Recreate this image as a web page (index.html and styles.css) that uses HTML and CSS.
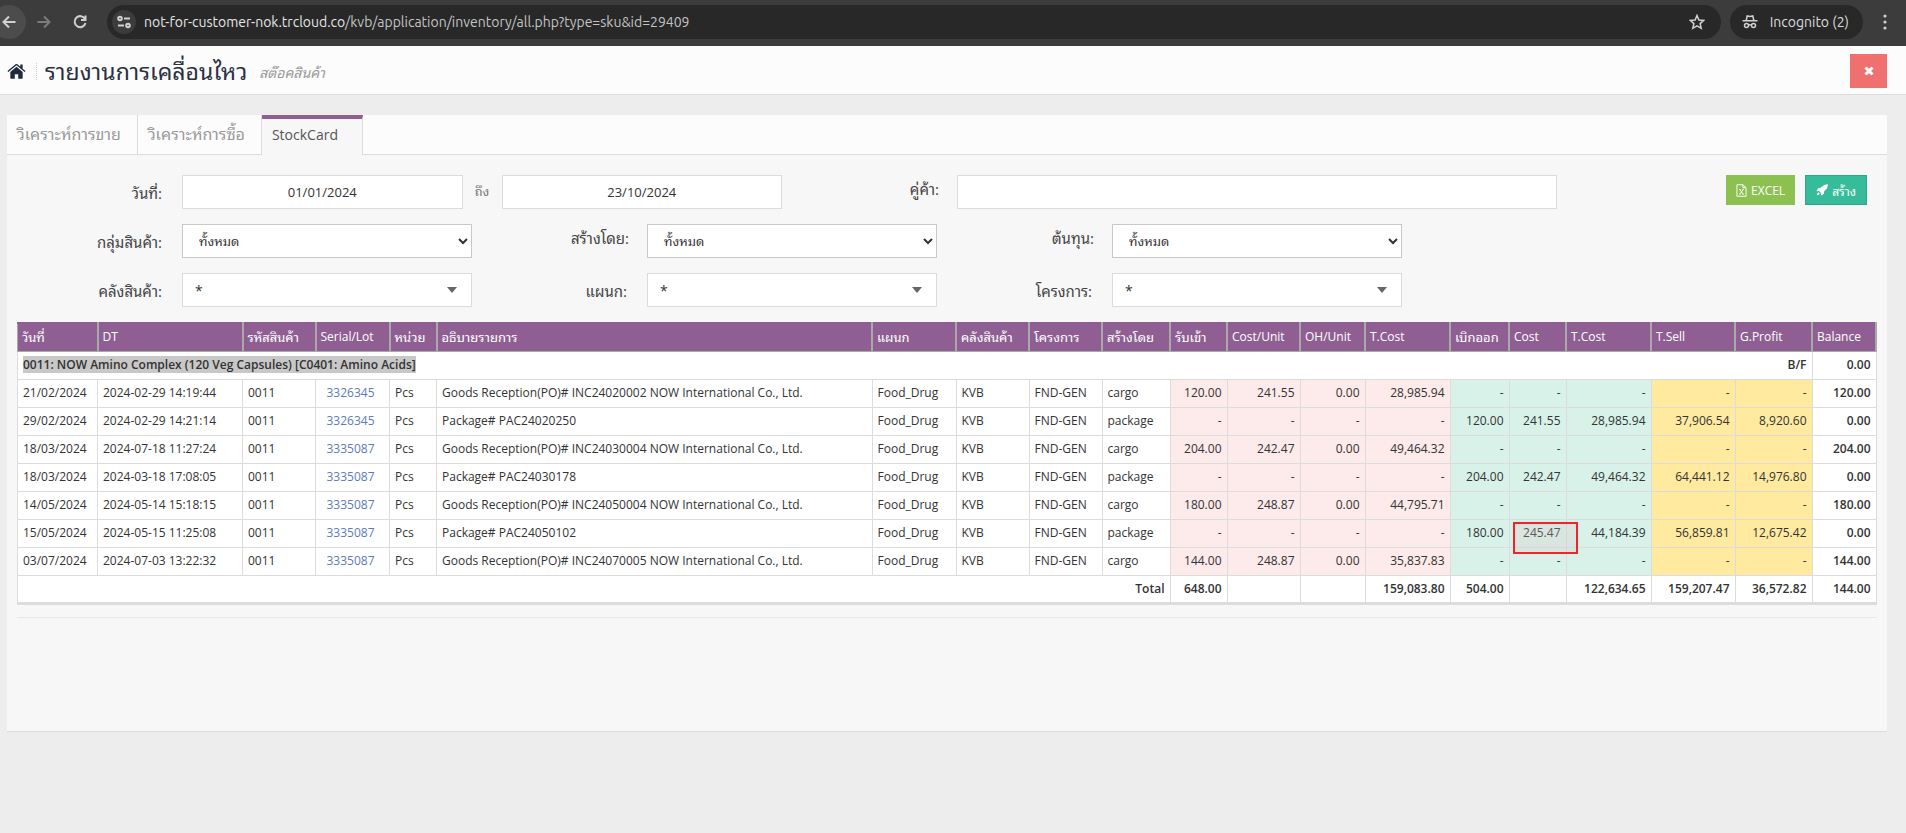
FILE: index.html
```html
<!DOCTYPE html>
<html lang="th">
<head>
<meta charset="utf-8">
<title>รายงานการเคลื่อนไหว</title>
<link rel="stylesheet" href="styles.css">
</head>
<body>
<nav class="browser">
  <button class="nav-btn nav-back" aria-label="Back"><svg viewBox="0 0 16 16" width="16" height="16"><path d="M14.500 8H3M8 2.500L2.500 8L8 13.500"/></svg></button>
  <button class="nav-btn nav-forward" aria-label="Forward"><svg viewBox="0 0 16 16" width="16" height="16"><path d="M1.500 8H13M8 2.500L13.500 8L8 13.500"/></svg></button>
  <button class="nav-btn" aria-label="Reload"><svg viewBox="0 0 16 16" width="16" height="16"><path d="M13 5A5.500 5.500 0 1 0 13.500 9M13.500 1.500V6H9"/></svg></button>
  <div class="address">
    <button class="site-info" aria-label="Site information"><svg viewBox="0 0 16 16" width="16" height="16"><circle cx="4" cy="4.500" r="1.800"/><path d="M8 4.500H14M2 11.500H8"/><circle cx="12" cy="11.500" r="1.800"/></svg></button>
    <span class="url"><span class="host">not-for-customer-nok.trcloud.co</span>/kvb/application/inventory/all.php?type=sku&amp;id=29409</span>
    <button class="star" aria-label="Bookmark"><svg viewBox="0 0 16 16" width="16" height="16"><path d="M8 1.500L9.900 6L14.700 6.400L11.100 9.600L12.200 14.300L8 11.800L3.800 14.300L4.900 9.600L1.300 6.400L6.100 6Z"/></svg></button>
  </div>
  <div class="incognito">
    <svg viewBox="0 0 16 16" width="16" height="16"><path d="M4.200 6.500L5.200 2L8 2.600L10.800 2L11.800 6.500M.500 6.700H15.500"/><circle cx="4.500" cy="11.500" r="2"/><circle cx="11.500" cy="11.500" r="2"/><path d="M6.500 11.200Q8 10.400 9.500 11.200"/></svg>
    <span>Incognito (2)</span>
  </div>
  <button class="menu" aria-label="Menu"><svg viewBox="0 0 4 16" width="4" height="16"><circle cx="2" cy="2" r="1.600"/><circle cx="2" cy="8" r="1.600"/><circle cx="2" cy="14" r="1.600"/></svg></button>
</nav>

<header class="page-head">
  <a class="home" href="#" aria-label="Home"><svg viewBox="0 0 20 17" width="19" height="17"><path d="M10 3.500L3.500 9V15.500Q3.500 16 4 16H8.200V11.500H11.800V16H16Q16.500 16 16.500 15.500V9Z"/><path d="M10 .500Q9.400 .500 9 .900L.500 8L1.400 9.100L10 2L18.600 9.100L19.500 8L16.500 5.500V1H14V3.400L11 .900Q10.600 .500 10 .500Z"/></svg></a>
  <h1>รายงานการเคลื่อนไหว</h1>
  <small>สต๊อคสินค้า</small>
  <button class="close" aria-label="Close"><svg viewBox="0 0 10 10" width="10" height="10"><path d="M1.500 1.500L8.500 8.500M8.500 1.500L1.500 8.500"/></svg></button>
</header>

<main class="panel">
  <div class="tabs">
    <a class="tab" href="#">วิเคราะห์การขาย</a>
    <a class="tab" href="#">วิเคราะห์การซื้อ</a>
    <a class="tab active" href="#">StockCard</a>
  </div>
  <div class="content">
    <form class="filters">
      <label for="from">วันที่:</label>
      <div class="dates">
        <input id="from" class="center" type="text" value="01/01/2024">
        <label class="until" for="to">ถึง</label>
        <input id="to" class="center" type="text" value="23/10/2024">
      </div>
      <label class="raised" for="partner">คู่ค้า:</label>
      <div class="partner"><input id="partner" type="text"></div>
      <div class="actions">
        <button class="btn excel" type="button"><svg viewBox="0 0 12 14" width="11" height="13"><path class="line" d="M1 .700H7.500L11 4V13.300H1ZM7.500 .700V4H11M3.500 6H5M7 6H8.500M3.500 11H5M7 11H8.500M4.200 6L7.800 11M7.800 6L4.200 11"/></svg>EXCEL</button>
        <button class="btn create" type="button"><svg viewBox="0 0 12 12" width="12" height="12"><path d="M11.800 .200Q8 0 5.600 3L5 3.800L2.300 4L.300 7.200L3 7L5 9L4.800 11.700L8 9.700L8.200 7L9 6.400Q12 4 11.800 .200ZM2.600 8.200Q1 8.500 .800 11.200Q3.500 11 3.800 9.400Z"/></svg>สร้าง</button>
      </div>

      <label class="row-start" for="group">กลุ่มสินค้า:</label>
      <div class="field"><select id="group" class="native"><option>ทั้งหมด</option></select></div>
      <label class="raised" for="creator">สร้างโดย:</label>
      <div class="field"><select id="creator" class="native"><option>ทั้งหมด</option></select></div>
      <label class="raised" for="cost">ต้นทุน:</label>
      <div class="field"><select id="cost" class="native"><option>ทั้งหมด</option></select></div>

      <label class="row-start" for="warehouse">คลังสินค้า:</label>
      <div class="field pick"><select id="warehouse"><option>*</option></select></div>
      <label for="dept">แผนก:</label>
      <div class="field pick"><select id="dept"><option>*</option></select></div>
      <label for="project">โครงการ:</label>
      <div class="field pick"><select id="project"><option>*</option></select></div>
    </form>

    <table class="stock">
      <colgroup>
        <col class="w80"><col class="w145"><col class="w73"><col class="w74"><col class="w47"><col><col class="w84"><col class="w73"><col class="w73"><col class="w68"><col class="w57"><col class="w73"><col class="w65"><col class="w85"><col class="w59"><col class="w57"><col class="w85"><col class="w84"><col class="w77"><col class="w64">
      </colgroup>
      <thead>
        <tr><th class="thai">วันที่</th><th>DT</th><th class="thai">รหัสสินค้า</th><th>Serial/Lot</th><th class="thai">หน่วย</th><th class="thai">อธิบายรายการ</th><th class="thai">แผนก</th><th class="thai">คลังสินค้า</th><th class="thai">โครงการ</th><th class="thai">สร้างโดย</th><th class="thai">รับเข้า</th><th>Cost/Unit</th><th>OH/Unit</th><th>T.Cost</th><th class="thai">เบิกออก</th><th>Cost</th><th>T.Cost</th><th>T.Sell</th><th>G.Profit</th><th>Balance</th></tr>
      </thead>
      <tbody>
        <tr class="strong"><td class="title" colspan="18"><mark>0011: NOW Amino Complex (120 Veg Capsules) [C0401: Amino Acids]</mark></td><td class="num bare">B/F</td><td class="num">0.00</td></tr>
        <tr><td>21/02/2024</td><td>2024-02-29 14:19:44</td><td>0011</td><td class="lot"><a href="#">3326345</a></td><td>Pcs</td><td>Goods Reception(PO)# INC24020002 NOW International Co., Ltd.</td><td>Food_Drug</td><td>KVB</td><td>FND-GEN</td><td>cargo</td><td class="num in">120.00</td><td class="num in">241.55</td><td class="num in">0.00</td><td class="num in">28,985.94</td><td class="num out">-</td><td class="num out">-</td><td class="num out">-</td><td class="num sell">-</td><td class="num sell">-</td><td class="num bal">120.00</td></tr>
        <tr><td>29/02/2024</td><td>2024-02-29 14:21:14</td><td>0011</td><td class="lot"><a href="#">3326345</a></td><td>Pcs</td><td>Package# PAC24020250</td><td>Food_Drug</td><td>KVB</td><td>FND-GEN</td><td>package</td><td class="num in">-</td><td class="num in">-</td><td class="num in">-</td><td class="num in">-</td><td class="num out">120.00</td><td class="num out">241.55</td><td class="num out">28,985.94</td><td class="num sell">37,906.54</td><td class="num sell">8,920.60</td><td class="num bal">0.00</td></tr>
        <tr><td>18/03/2024</td><td>2024-07-18 11:27:24</td><td>0011</td><td class="lot"><a href="#">3335087</a></td><td>Pcs</td><td>Goods Reception(PO)# INC24030004 NOW International Co., Ltd.</td><td>Food_Drug</td><td>KVB</td><td>FND-GEN</td><td>cargo</td><td class="num in">204.00</td><td class="num in">242.47</td><td class="num in">0.00</td><td class="num in">49,464.32</td><td class="num out">-</td><td class="num out">-</td><td class="num out">-</td><td class="num sell">-</td><td class="num sell">-</td><td class="num bal">204.00</td></tr>
        <tr><td>18/03/2024</td><td>2024-03-18 17:08:05</td><td>0011</td><td class="lot"><a href="#">3335087</a></td><td>Pcs</td><td>Package# PAC24030178</td><td>Food_Drug</td><td>KVB</td><td>FND-GEN</td><td>package</td><td class="num in">-</td><td class="num in">-</td><td class="num in">-</td><td class="num in">-</td><td class="num out">204.00</td><td class="num out">242.47</td><td class="num out">49,464.32</td><td class="num sell">64,441.12</td><td class="num sell">14,976.80</td><td class="num bal">0.00</td></tr>
        <tr><td>14/05/2024</td><td>2024-05-14 15:18:15</td><td>0011</td><td class="lot"><a href="#">3335087</a></td><td>Pcs</td><td>Goods Reception(PO)# INC24050004 NOW International Co., Ltd.</td><td>Food_Drug</td><td>KVB</td><td>FND-GEN</td><td>cargo</td><td class="num in">180.00</td><td class="num in">248.87</td><td class="num in">0.00</td><td class="num in">44,795.71</td><td class="num out">-</td><td class="num out">-</td><td class="num out">-</td><td class="num sell">-</td><td class="num sell">-</td><td class="num bal">180.00</td></tr>
        <tr><td>15/05/2024</td><td>2024-05-15 11:25:08</td><td>0011</td><td class="lot"><a href="#">3335087</a></td><td>Pcs</td><td>Package# PAC24050102</td><td>Food_Drug</td><td>KVB</td><td>FND-GEN</td><td>package</td><td class="num in">-</td><td class="num in">-</td><td class="num in">-</td><td class="num in">-</td><td class="num out">180.00</td><td class="num out flagged">245.47<span class="flag"></span></td><td class="num out">44,184.39</td><td class="num sell">56,859.81</td><td class="num sell">12,675.42</td><td class="num bal">0.00</td></tr>
        <tr><td>03/07/2024</td><td>2024-07-03 13:22:32</td><td>0011</td><td class="lot"><a href="#">3335087</a></td><td>Pcs</td><td>Goods Reception(PO)# INC24070005 NOW International Co., Ltd.</td><td>Food_Drug</td><td>KVB</td><td>FND-GEN</td><td>cargo</td><td class="num in">144.00</td><td class="num in">248.87</td><td class="num in">0.00</td><td class="num in">35,837.83</td><td class="num out">-</td><td class="num out">-</td><td class="num out">-</td><td class="num sell">-</td><td class="num sell">-</td><td class="num bal">144.00</td></tr>
      </tbody>
      <tfoot>
        <tr class="strong"><td class="num" colspan="10">Total</td><td class="num">648.00</td><td></td><td></td><td class="num">159,083.80</td><td class="num">504.00</td><td></td><td class="num">122,634.65</td><td class="num">159,207.47</td><td class="num">36,572.82</td><td class="num">144.00</td></tr>
      </tfoot>
    </table>
    <hr>
  </div>
</main>
</body>
</html>
```
FILE: styles.css
```css
* { box-sizing: border-box; }
body {
  margin: 0;
  background: #ededed;
  color: #333;
  font-family: "Open Sans", "Noto Sans Thai Looped", "Droid Sans Thai", Loma, Garuda, Waree, Umpush, sans-serif;
  font-size: 12px;
}
button { border: 0; padding: 0; background: none; color: inherit; font: inherit; cursor: pointer; }
input, select { font: inherit; color: inherit; }
a { color: #5b7bc0; text-decoration: none; }

.browser {
  display: flex;
  align-items: center;
  height: 46px;
  padding: 0 19px 2px 0;
  background: #3c3c3c;
  color: #dedede;
  font-family: Ubuntu, "Noto Sans", sans-serif;
  font-size: 14px;
  overflow: hidden;
}
.browser svg { display: block; fill: none; stroke: #d0d0d0; stroke-width: 2; }
.nav-btn { display: grid; place-items: center; flex: none; width: 36px; height: 34px; border-radius: 50%; }
.nav-back { width: 34px; margin-left: -8px; background: #4c4c4c; }
.nav-forward svg { stroke: #7c7c7c; }
.address {
  display: flex;
  align-items: center;
  flex: 1;
  height: 34px;
  margin-left: 9px;
  padding: 0 16px 0 5px;
  border-radius: 17px;
  background: #282828;
}
.site-info { display: grid; place-items: center; width: 24px; height: 24px; border-radius: 50%; background: #3c3c3c; }
.url { flex: 1; margin-left: 8px; color: #c4c4c4; font-family: Ubuntu, Roboto, sans-serif; }
.host { color: #e6e6e6; }
.browser .star svg { stroke-width: 1.5; }
.incognito {
  display: flex;
  align-items: center;
  gap: 12px;
  height: 34px;
  margin-left: 9px;
  padding: 0 14px 0 12px;
  border-radius: 17px;
  background: #282828;
}
.incognito svg { stroke-width: 1.5; }
.menu { margin-left: 20px; }
.browser .menu svg { fill: #d0d0d0; stroke: none; }

.page-head {
  display: flex;
  align-items: center;
  height: 49px;
  padding: 2px 19px 0 7px;
  border-bottom: 1px solid #dcdcdc;
  background: #fcfcfc;
}
.home { padding-right: 10px; border-right: 1px dotted #ccc; }
.home svg { display: block; fill: #1f2a3c; }
h1 { margin: 0 0 0 8px; color: #2a3040; font-size: 23px; font-weight: 400; line-height: 40px; }
small { margin-left: 12px; color: #999; font-size: 14px; font-style: italic; }
.close { display: grid; place-items: center; width: 37px; height: 34px; margin-left: auto; background: #f07070; }
.close svg { stroke: #fff; stroke-width: 3; }

.panel { min-height: 617px; margin: 20px 19px 0 7px; border-bottom: 1px solid #dcdcdc; background: #f7f7f7; }
.tabs { display: flex; height: 40px; background: #fcfcfc; }
.tabs::after { content: ""; flex: 1; border-bottom: 1px solid #dcdcdc; }
.tab {
  padding: 0 16px 0 10px;
  border-right: 1px solid #dcdcdc;
  border-bottom: 1px solid #dcdcdc;
  color: #999;
  font-size: 16px;
  line-height: 39px;
}
.tab.active {
  padding-right: 24px;
  border-top: 4px solid #8f5f94;
  border-bottom: 0;
  background: #f7f7f7;
  color: #555;
  font-size: 14px;
  line-height: 32px;
}

.content { padding: 20px 10px 0; }
.filters { display: grid; grid-template-columns: repeat(12, 1fr); row-gap: 15px; margin-bottom: 15px; }
.filters label { padding-right: 10px; color: #444; font-size: 15px; line-height: 36px; text-align: right; height: 34px; white-space: nowrap; }
.filters .raised { padding-right: 8px; line-height: 28px; }
.row-start { grid-column: 1; }
.field { grid-column: span 2; padding: 0 10px; }
.dates { display: flex; grid-column: span 4; padding: 0 10px; }
.dates input { flex: 1; min-width: 0; }
.filters .until { width: 39px; padding: 0; color: #777; font-size: 13px; line-height: 32px; text-align: center; }
.partner { grid-column: span 4; padding: 0 10px; }
.actions { display: flex; grid-column: span 2; justify-content: flex-end; gap: 10px; padding-right: 10px; }
input, select { display: block; width: 100%; height: 34px; border: 1px solid #dcdcdc; border-radius: 0; background: #fff; }
input { padding: 0 12px; font-size: 13px; }
.center { text-align: center; }
.native { padding: 0 0 0 12px; border-color: #c8c8c8; font-size: 13px; }
.pick { position: relative; }
.pick select { appearance: none; padding: 0 12px; font-size: 14px; }
.pick::after {
  content: "";
  position: absolute;
  top: 14px;
  right: 25px;
  border: 5px solid transparent;
  border-top: 6px solid #666;
  border-bottom: 0;
  pointer-events: none;
}
.btn { display: flex; align-items: center; justify-content: center; gap: 4px; height: 30px; padding: 0 10px; color: #fff; }
.btn svg { fill: #fff; }
.btn .line { fill: none; stroke: #fff; }
.excel { background: #8cc152; }
.create { border: 1px solid #2fa88a; background: #37bc9b; }

.stock { width: 100%; table-layout: fixed; border-collapse: collapse; border-bottom: 3px solid #dcdcdc; background: #fff; }
.stock th, .stock td { height: 28px; padding: 0 5px; border: 1px solid #dcdcdc; line-height: 20px; text-align: left; white-space: nowrap; }
.stock th { border: 1px solid #a9a9a9; border-width: 1px 2px; padding-left: 4px; background: #8f5f94; color: #fff; font-weight: 400; }
.stock th:first-child { border-left-width: 1px; }
.stock .thai { font-size: 13px; }
.stock thead { border-top: 2px solid #8f5f94; }
.stock .num { text-align: right; }
.stock .lot { padding-right: 9px; text-align: center; }
.stock .in { background: #fdeaea; }
.stock .out { background: #d8f2ea; }
.stock .sell { background: #ffeaa0; }
.stock .bal { font-weight: 600; }
.strong { font-weight: 600; }
.stock .title { border-right: 0; }
.stock .bare { border-left: 0; }
.stock tfoot td { border-bottom: 3px solid #dcdcdc; }
mark { display: inline-block; background: #c8c8c8; color: inherit; line-height: 17px; }
.flagged { position: relative; }
.flag { position: absolute; top: 2px; left: 3px; width: 65px; height: 32px; border: 2px solid #f5222a; background: rgba(220, 190, 190, .25); z-index: 1; }
.w47 { width: 47px; } .w57 { width: 57px; } .w59 { width: 59px; } .w64 { width: 64px; } .w65 { width: 65px; }
.w68 { width: 68px; } .w73 { width: 73px; } .w74 { width: 74px; } .w77 { width: 77px; } .w80 { width: 80px; }
.w84 { width: 84px; } .w85 { width: 85px; } .w145 { width: 145px; }
hr { height: 1px; margin: 12px 0 0; border: 0; background: #e9e9e9; }
```
